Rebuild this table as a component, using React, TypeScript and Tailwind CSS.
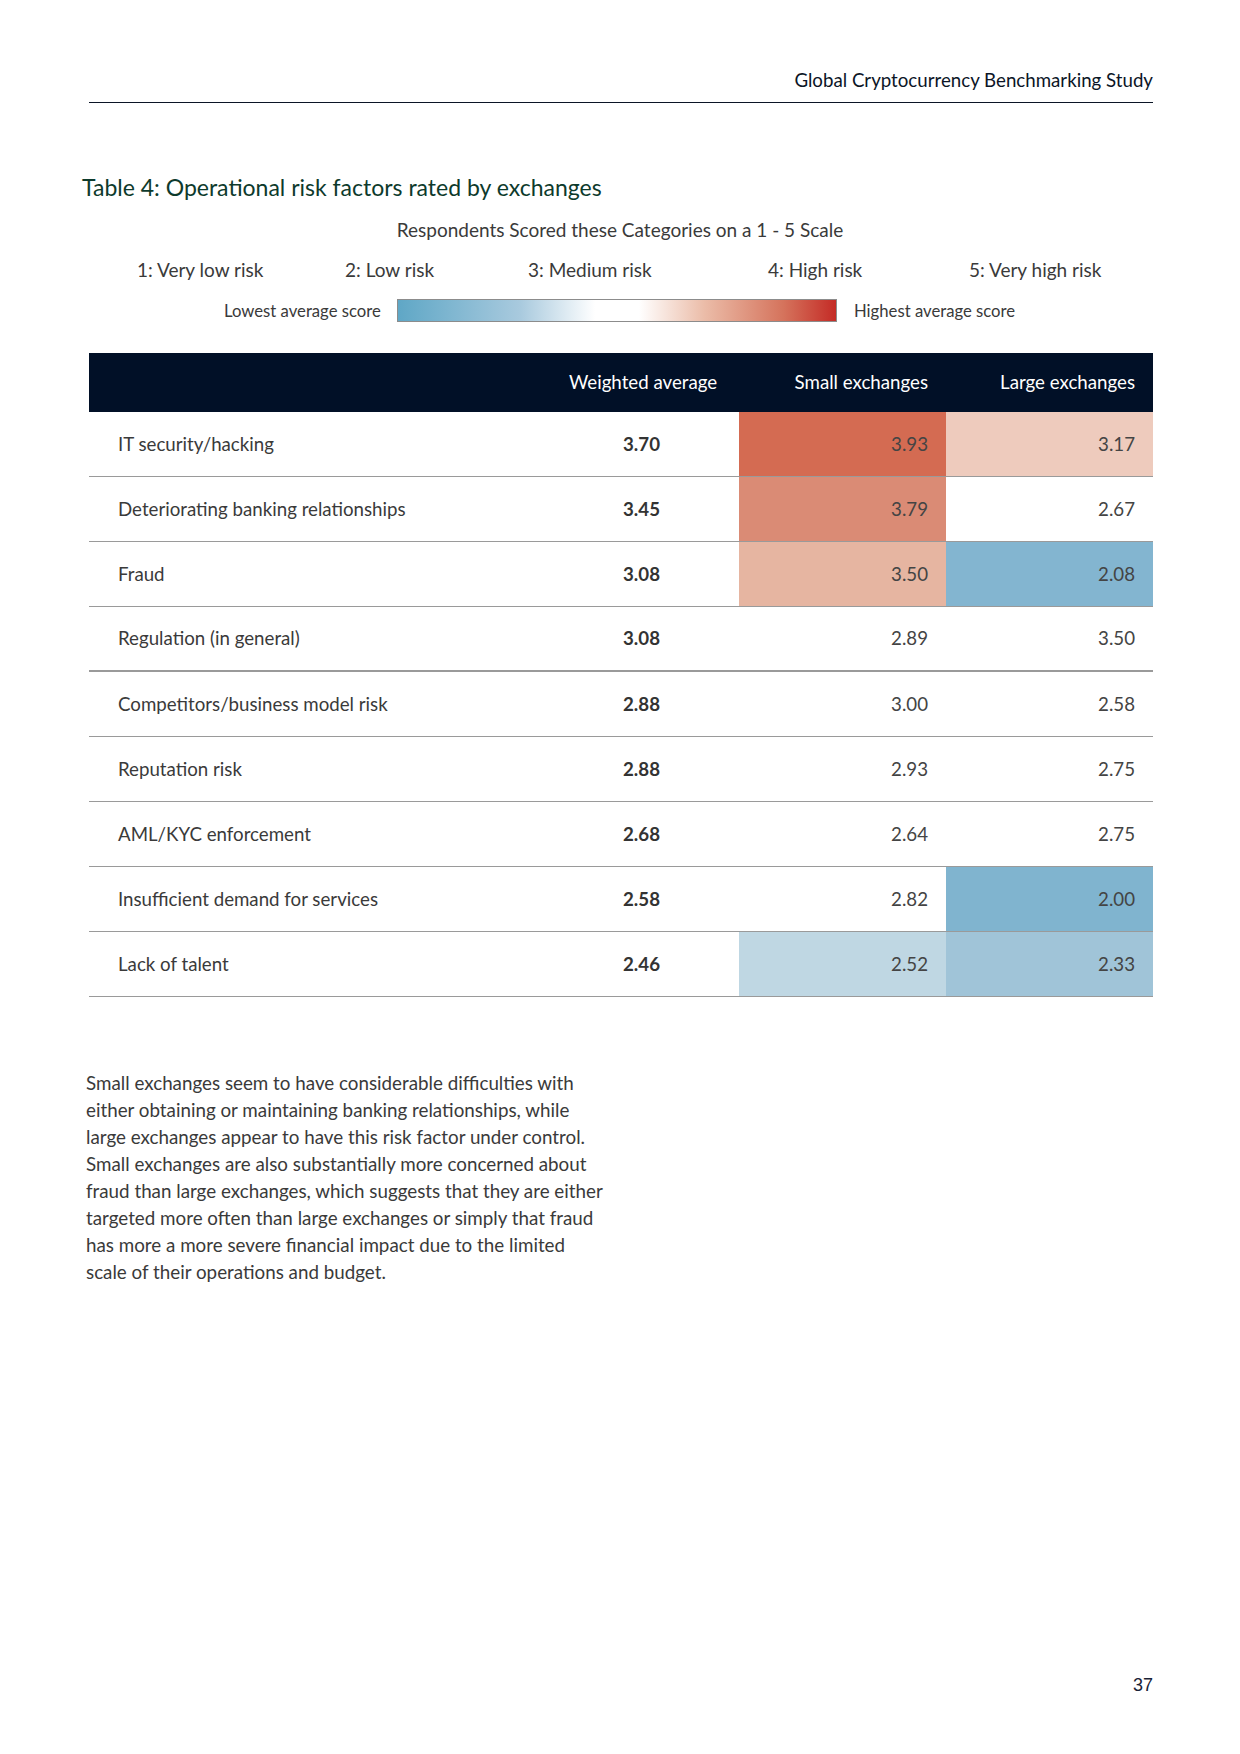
const rows: {
  label: string;
  avg: string;
  small: string;
  large: string;
  smallBg?: string;
  largeBg?: string;
  thick?: boolean;
}[] = [
  { label: "IT security/hacking", avg: "3.70", small: "3.93", large: "3.17", smallBg: "bg-[#d46b52]", largeBg: "bg-[#eecbbd]" },
  { label: "Deteriorating banking relationships", avg: "3.45", small: "3.79", large: "2.67", smallBg: "bg-[#da8b75]" },
  { label: "Fraud", avg: "3.08", small: "3.50", large: "2.08", smallBg: "bg-[#e6b5a1]", largeBg: "bg-[#83b5d0]" },
  { label: "Regulation (in general)", avg: "3.08", small: "2.89", large: "3.50", thick: true },
  { label: "Competitors/business model risk", avg: "2.88", small: "3.00", large: "2.58" },
  { label: "Reputation risk", avg: "2.88", small: "2.93", large: "2.75" },
  { label: "AML/KYC enforcement", avg: "2.68", small: "2.64", large: "2.75" },
  { label: "Insufficient demand for services", avg: "2.58", small: "2.82", large: "2.00", largeBg: "bg-[#80b4cf]" },
  { label: "Lack of talent", avg: "2.46", small: "2.52", large: "2.33", smallBg: "bg-[#bfd7e3]", largeBg: "bg-[#a0c4d8]" },
];

const scale = ["1: Very low risk", "2: Low risk", "3: Medium risk", "4: High risk", "5: Very high risk"];

const paragraph = [
  "Small exchanges seem to have considerable difficulties with",
  "either obtaining or maintaining banking relationships, while",
  "large exchanges appear to have this risk factor under control.",
  "Small exchanges are also substantially more concerned about",
  "fraud than large exchanges, which suggests that they are either",
  "targeted more often than large exchanges or simply that fraud",
  "has more a more severe financial impact due to the limited",
  "scale of their operations and budget.",
];

export default function App() {
  return (
    <div className="w-[1240px] h-[1754px] bg-white font-['Lato','Noto_Sans',sans-serif] flex flex-col">
      {/* running header */}
      <div className="ml-[89px] mr-[87px] mt-[68px] border-b-[1.5px] border-[#0b1526] pb-[9px] flex justify-end">
        <span className="text-[18.7px] leading-[25px] text-[#0b1526]">Global Cryptocurrency Benchmarking Study</span>
      </div>

      <h2 className="ml-[82px] mt-[69px] text-[23px] leading-[30px] text-[#0d3a2c]">
        Table 4: Operational risk factors rated by exchanges
      </h2>

      <p className="mt-[16px] text-center text-[19px] leading-[24px] text-[#3a3a3a]">
        Respondents Scored these Categories on a 1 - 5 Scale
      </p>

      {/* scale labels */}
      <div className="mt-[16px] relative h-[24px] text-[19px] leading-[24px] text-[#3a3a3a]">
        <span className="absolute left-[137px]">{scale[0]}</span>
        <span className="absolute left-[345px]">{scale[1]}</span>
        <span className="absolute left-[528px]">{scale[2]}</span>
        <span className="absolute left-[768px]">{scale[3]}</span>
        <span className="absolute left-[969px]">{scale[4]}</span>
      </div>

      {/* colour legend */}
      <div className="mt-[17px] flex items-center ml-[224px]">
        <span className="text-[16.7px] leading-[20px] text-[#3a3a3a] w-[173px]">Lowest average score</span>
        <div className="w-[440px] h-[23px] border border-[#8c8c8c] bg-[linear-gradient(to_right,#5fa7c6_0%,#a9cade_28%,#ffffff_45%,#ffffff_55%,#ebbca8_70%,#d5735c_88%,#c42b26_100%)]" />
        <span className="ml-[17px] text-[16.7px] leading-[20px] text-[#3a3a3a]">Highest average score</span>
      </div>

      {/* table */}
      <div className="ml-[89px] mr-[87px] mt-[31px]">
        <div className="h-[59px] bg-[#011027] text-white text-[18.7px] flex items-center whitespace-nowrap">
          <div className="flex-1" />
          <div className="w-[170px] text-right pr-[22px]">Weighted average</div>
          <div className="w-[207px] text-right pr-[18px]">Small exchanges</div>
          <div className="w-[207px] text-right pr-[18px]">Large exchanges</div>
        </div>
        {rows.map((r) => (
          <div
            key={r.label}
            className={`h-[65px] flex text-[18.7px] text-[#3a3a3a] ${r.thick ? "border-b-2" : "border-b"} border-[#9a9a9a]`}
          >
            <div className="flex-1 flex items-center pl-[29px]">{r.label}</div>
            <div className="w-[170px] flex items-center justify-end pr-[79px] font-bold text-[#333333]">{r.avg}</div>
            <div className={`w-[207px] flex items-center justify-end pr-[18px] text-[#444444] ${r.smallBg ?? ""}`}>{r.small}</div>
            <div className={`w-[207px] flex items-center justify-end pr-[18px] text-[#444444] ${r.largeBg ?? ""}`}>{r.large}</div>
          </div>
        ))}
      </div>

      {/* commentary */}
      <div className="ml-[86px] mt-[72px] text-[18.8px] leading-[27px] text-[#3a3a3a]">
        {paragraph.map((l) => (
          <div key={l}>{l}</div>
        ))}
      </div>

      <div className="flex-1" />
      <div className="ml-[88px] mr-[87px] mb-[58px] flex justify-end">
        <span className="font-['Liberation_Sans',Arial,sans-serif] text-[18px] leading-[22px] text-[#1a2236]">37</span>
      </div>
    </div>
  );
}
